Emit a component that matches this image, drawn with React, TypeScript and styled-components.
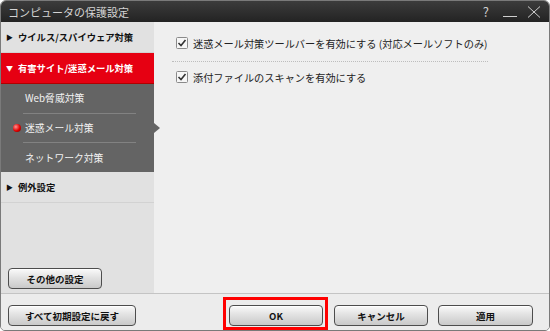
import React from 'react';
import styled, { createGlobalStyle, css } from 'styled-components';

const Global = createGlobalStyle`
  html, body {
    margin: 0;
    padding: 0;
    background: #ffffff;
  }
  body {
    font-family: "Noto Sans CJK JP", "Noto Sans", sans-serif;
  }
`;

const Window = styled.div`
  display: flex;
  flex-direction: column;
  width: 550px;
  height: 331px;
  box-sizing: border-box;
  border: 1px solid #7a7a7a;
  border-radius: 6px 6px 5px 5px;
  overflow: hidden;
  background: #e9e9e9;
`;

const TitleBar = styled.div`
  display: flex;
  align-items: center;
  height: 21px;
  padding: 0 8px 0 7px;
  background: linear-gradient(#3c3c3c, #232323);
  color: #d4d4d4;
  font-size: 11px;
  flex-shrink: 0;
`;

const Title = styled.span`
  flex: 1;
`;

const TitleButtons = styled.div`
  display: flex;
  align-items: center;
  gap: 10px;
  color: #cfcfcf;
`;

const Help = styled.span`
  font-size: 13px;
  margin-right: 4px;
`;

const Body = styled.div`
  display: flex;
  height: 271px;
  flex-shrink: 0;
`;

const Sidebar = styled.div`
  display: flex;
  flex-direction: column;
  width: 153px;
  background: #e1e1e1;
  flex-shrink: 0;
`;

const Header = styled.div<{ $active?: boolean }>`
  display: flex;
  align-items: center;
  gap: 6px;
  height: 30px;
  padding-left: 5px;
  font-size: 9.3px;
  font-weight: bold;
  color: #111;
  border-bottom: 1px solid #d2d2d2;
  ${({ $active }) =>
    $active &&
    css`
      background: #e60012;
      color: #fff;
      border-bottom-color: #b00000;
    `}
`;

const Arrow = styled.span`
  font-size: 7px;
  width: 6px;
`;

const SubMenu = styled.div`
  display: flex;
  flex-direction: column;
  padding: 0 18px 0 22px;
  background: #646464;
  height: 88px;
`;

const SubItem = styled.div<{ $current?: boolean }>`
  position: relative;
  display: flex;
  align-items: center;
  flex: 1;
  padding-left: 2px;
  font-size: 9.8px;
  color: #f2f2f2;
  & + & {
    border-top: 1px solid #828282;
  }
  ${({ $current }) =>
    $current &&
    css`
      &::after {
        content: '';
        position: absolute;
        right: -24px;
        top: 50%;
        margin-top: -5px;
        border-left: 6px solid #646464;
        border-top: 5px solid transparent;
        border-bottom: 5px solid transparent;
      }
    `}
`;

const Dot = styled.span`
  position: absolute;
  left: -10px;
  top: 50%;
  margin-top: -4px;
  width: 8px;
  height: 8px;
  border-radius: 50%;
  background: radial-gradient(circle at 35% 35%, #ff9090, #e00000 55%, #700000);
`;

const SideFooter = styled.div`
  margin-top: auto;
  padding: 0 0 4px 7px;
`;

const Content = styled.div`
  flex: 1;
  padding-left: 18px;
  background: #efefef;
`;

const Option = styled.label`
  display: flex;
  align-items: center;
  gap: 5px;
  height: 24px;
  padding-left: 4px;
  font-size: 10.2px;
  color: #222;
`;

const Separator = styled.div`
  width: 316px;
  border-top: 1px dotted #bdbdbd;
`;

const Footer = styled.div`
  display: flex;
  align-items: flex-start;
  flex: 1;
  padding: 3px 16px 0 7px;
  border-top: 1px solid #c4c4c4;
  background: #ececec;
`;

const Button = styled.button<{ $width: number }>`
  display: block;
  width: ${({ $width }) => $width}px;
  height: 21px;
  margin-top: 8px;
  padding: 0;
  border: 1px solid #4d4d4d;
  border-radius: 4px;
  background: linear-gradient(#fafafa, #e2e2e2 45%, #c9c9c9);
  box-shadow: inset 0 1px 0 #fff;
  font-family: inherit;
  font-size: 9.5px;
  font-weight: bold;
  color: #111;
`;

const Highlight = styled.div`
  display: flex;
  margin-left: auto;
  padding: 5px 2px 1px 3px;
  border: 3px solid #ff0000;
  & > button {
    margin-top: 0;
  }
`;

const Spaced = styled.div<{ $gap: number }>`
  display: flex;
  margin-left: ${({ $gap }) => $gap}px;
`;

const CheckBox: React.FC = () => (
  <svg width="12" height="12" viewBox="0 0 12 12">
    <rect x="0.5" y="0.5" width="11" height="11" rx="1" fill="#f6f6f6" stroke="#8a8a8a" />
    <path d="M2.5 6 L5 8.5 L9.5 3" fill="none" stroke="#333" strokeWidth="1.6" />
  </svg>
);

const App: React.FC = () => (
  <>
    <Global />
    <Window>
      <TitleBar>
        <Title>コンピュータの保護設定</Title>
        <TitleButtons>
          <Help>?</Help>
          <svg width="14" height="12" viewBox="0 0 14 12">
            <line x1="0" y1="10.5" x2="14" y2="10.5" stroke="#cfcfcf" strokeWidth="1" />
          </svg>
          <svg width="14" height="12" viewBox="0 0 14 12">
            <path d="M1 0.5 L13 11.5 M13 0.5 L1 11.5" stroke="#cfcfcf" strokeWidth="1" />
          </svg>
        </TitleButtons>
      </TitleBar>
      <Body>
        <Sidebar>
          <Header>
            <Arrow>▶</Arrow>ウイルス/スパイウェア対策
          </Header>
          <Header $active>
            <Arrow>▼</Arrow>有害サイト/迷惑メール対策
          </Header>
          <SubMenu>
            <SubItem>Web脅威対策</SubItem>
            <SubItem $current>
              <Dot />
              迷惑メール対策
            </SubItem>
            <SubItem>ネットワーク対策</SubItem>
          </SubMenu>
          <Header>
            <Arrow>▶</Arrow>例外設定
          </Header>
          <SideFooter>
            <Button $width={94}>その他の設定</Button>
          </SideFooter>
        </Sidebar>
        <Content>
          <Option style={{ marginTop: 9 }}>
            <CheckBox />
            迷惑メール対策ツールバーを有効にする (対応メールソフトのみ)
          </Option>
          <Separator style={{ marginTop: 6 }} />
          <Option style={{ marginTop: 3 }}>
            <CheckBox />
            添付ファイルのスキャンを有効にする
          </Option>
        </Content>
      </Body>
      <Footer>
        <Button $width={128}>すべて初期設定に戻す</Button>
        <Highlight>
          <Button $width={94}>OK</Button>
        </Highlight>
        <Spaced $gap={6}>
          <Button $width={94}>キャンセル</Button>
        </Spaced>
        <Spaced $gap={10}>
          <Button $width={95}>適用</Button>
        </Spaced>
      </Footer>
    </Window>
  </>
);

export default App;
